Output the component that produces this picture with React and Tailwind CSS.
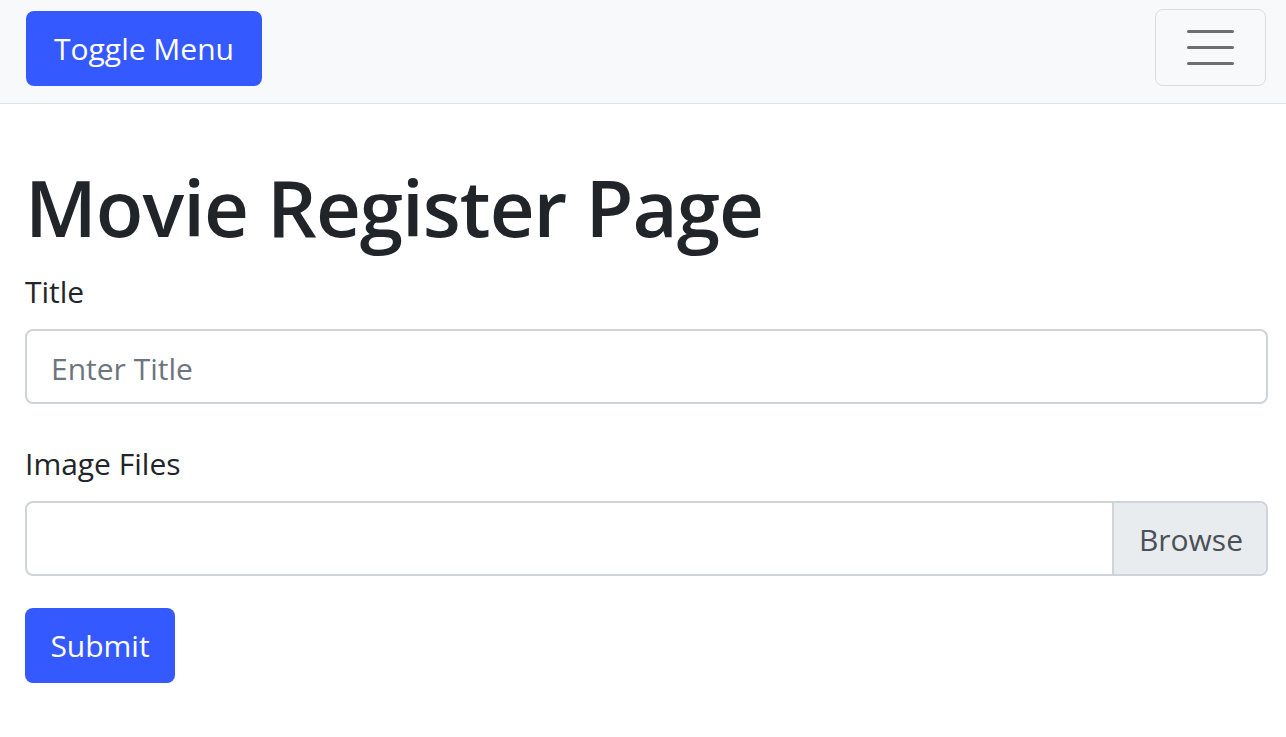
import React from "react";

export default function App() {
  return (
    <div className="min-h-screen bg-white text-[#212529] font-['Open_Sans',sans-serif]">
      {/* Barra superior */}
      <nav className="flex items-center justify-between h-[104px] bg-[#f8f9fa] border-b border-[#dee2e6] pl-[26px] pr-[20px]">
        <button className="h-[75px] w-[236px] rounded-[8px] bg-[#3459fe] text-white text-[30px] mb-[6px]">
          Toggle Menu
        </button>
        <button className="flex flex-col items-center justify-center gap-[13px] h-[77px] w-[111px] rounded-[8px] border border-[#dcdcdc] mb-[8px]">
          <span className="block w-[47px] h-[3px] rounded bg-[#6e6e6e]"></span>
          <span className="block w-[47px] h-[3px] rounded bg-[#6e6e6e]"></span>
          <span className="block w-[47px] h-[3px] rounded bg-[#6e6e6e]"></span>
        </button>
      </nav>

      {/* Formulario */}
      <main className="pl-[25px] pr-[18px] pt-[55px]">
        <h1 className="text-[78px] leading-[96px] font-semibold tracking-[-1px] mb-[13px]">
          Movie Register Page
        </h1>

        <form onSubmit={(e) => e.preventDefault()}>
          <div className="mb-[36px]">
            <label className="block text-[30px] leading-[48px] mb-[13px]">Title</label>
            <input
              type="text"
              placeholder="Enter Title"
              className="w-full h-[75px] rounded-[8px] border-2 border-[#ced4da] px-[24px] pt-[4px] text-[30px] placeholder:text-[#6c757d] outline-none"
            />
          </div>

          <div className="mb-[32px]">
            <label className="block text-[30px] leading-[48px] mb-[13px]">Image Files</label>
            <div className="flex w-full h-[75px] rounded-[8px] border-2 border-[#ced4da] overflow-hidden">
              <div className="flex-1"></div>
              <div className="flex items-center pl-[25px] pr-[23px] pt-[2px] bg-[#e9ecef] border-l-2 border-[#ced4da] text-[30px] text-[#495057]">
                Browse
              </div>
            </div>
          </div>

          <button
            type="submit"
            className="h-[75px] w-[150px] rounded-[8px] bg-[#3459fe] text-white text-[30px]"
          >
            Submit
          </button>
        </form>
      </main>
    </div>
  );
}
